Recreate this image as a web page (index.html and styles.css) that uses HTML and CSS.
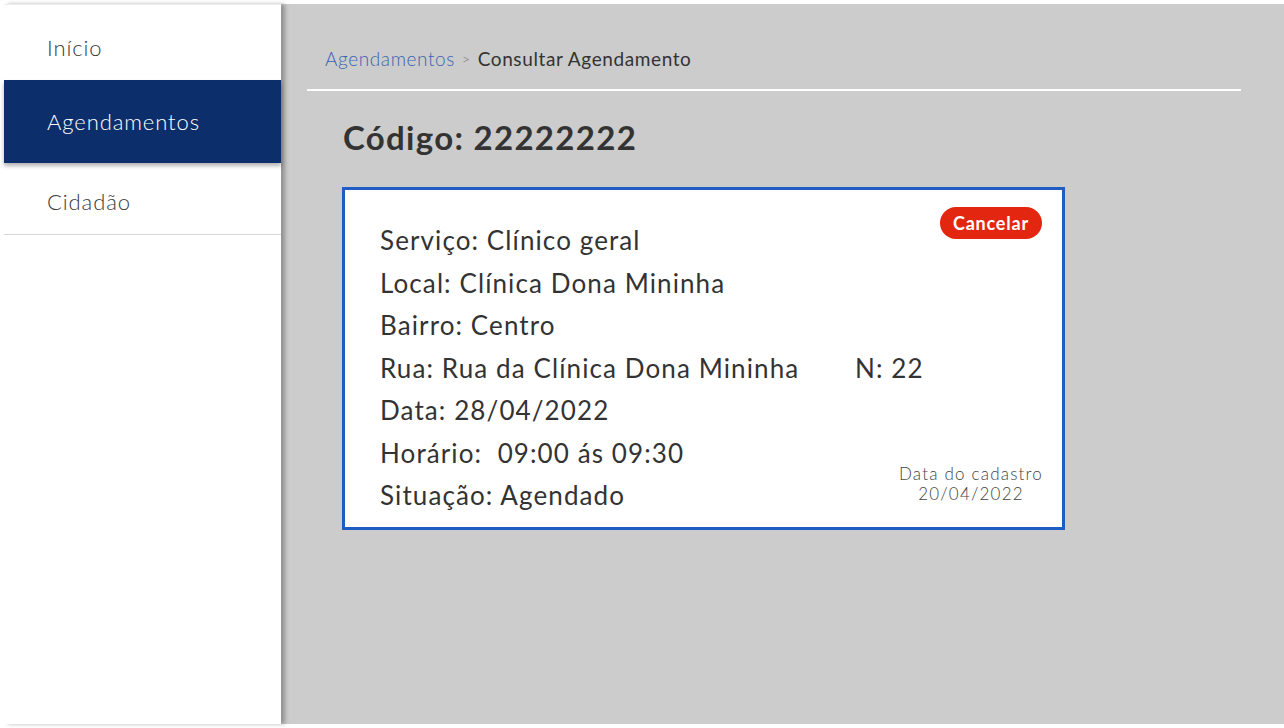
FILE: index.html
```html
<!DOCTYPE html>
<html lang="pt-BR">
<head>
<meta charset="utf-8">
<title>Consultar Agendamento</title>
<link rel="stylesheet" href="styles.css">
</head>
<body>
<div class="app">
  <nav class="sidebar">
    <a class="nav-item nav-first">Início</a>
    <a class="nav-item active">Agendamentos</a>
    <a class="nav-item nav-last">Cidadão</a>
  </nav>
  <main class="main">
    <div class="breadcrumb">
      <span class="crumb-link">Agendamentos</span>
      <span class="crumb-sep">&gt;</span>
      <span class="crumb-current">Consultar Agendamento</span>
    </div>
    <div class="content">
      <h1 class="title">Código: 22222222</h1>
      <section class="card">
        <button class="btn-cancel">Cancelar</button>
        <div class="line">Serviço: Clínico geral</div>
        <div class="line">Local: Clínica Dona Mininha</div>
        <div class="line">Bairro: Centro</div>
        <div class="line row"><span class="rua">Rua: Rua da Clínica Dona Mininha</span><span>N: 22</span></div>
        <div class="line">Data: 28/04/2022</div>
        <div class="line">Horário:&nbsp; 09:00 ás 09:30</div>
        <div class="line">Situação: Agendado</div>
        <div class="created">Data do cadastro<br>20/04/2022</div>
      </section>
    </div>
  </main>
</div>
</body>
</html>
```
FILE: styles.css
```css
* { box-sizing: border-box; }
html, body { margin: 0; padding: 0; background: #ffffff; }
body {
  font-family: Lato, "Noto Sans", sans-serif;
  color: #333333;
}
.app {
  display: flex;
  height: 720px;
  margin: 4px 0 4px 4px;
}
.sidebar {
  width: 277px;
  flex: none;
  background: #ffffff;
  border-top: 1px solid #ececec;
  display: flex;
  flex-direction: column;
  position: relative;
  z-index: 2;
  box-shadow: 4px 0 4px rgba(0,0,0,0.28);
}
.nav-item {
  display: flex;
  align-items: center;
  padding: 0 43px;
  font-size: 22px;
  font-weight: 300;
  color: #3a3a3a;
  height: 75px;
  letter-spacing: 0.9px;
}
.nav-first {
  padding-top: 10px;
}
.nav-item.active {
  height: 83px;
  background: #0c2f6c;
  color: #ffffff;
  box-shadow: 0 3px 4px rgba(0,0,0,0.3);
  position: relative;
}
.nav-last {
  height: 72px;
  border-bottom: 1px solid #d6d6d6;
  padding-top: 6px;
}
.main {
  flex: 1;
  background: #cccccc;
  display: flex;
  flex-direction: column;
}
.breadcrumb {
  margin: 0 43px 0 26px;
  padding: 43px 0 18px 18px;
  border-bottom: 2px solid #ffffff;
  font-size: 19px;
  line-height: 24px;
  display: flex;
  gap: 7px;
  align-items: center;
  letter-spacing: 0.6px;
}
.crumb-link { color: #3b63b3; font-weight: 300; }
.crumb-sep { color: #9a9a9a; font-size: 14px; }
.crumb-current { color: #333333; font-weight: 400; }
.content {
  padding: 0 0 0 61px;
}
.title {
  margin: 24px 0 28px 1px;
  font-size: 33px;
  line-height: 44px;
  font-weight: 700;
  color: #333333;
  letter-spacing: 1.3px;
}
.card {
  position: relative;
  width: 723px;
  background: #ffffff;
  border: 3px solid #1f5cc4;
  padding: 29px 20px 10px 35px;
}
.line {
  font-size: 26px;
  line-height: 42.5px;
  font-weight: 400;
  color: #333333;
  letter-spacing: 1.1px;
}
.row { display: flex; }
.rua { width: 475px; flex: none; }
.btn-cancel {
  position: absolute;
  top: 17px;
  right: 20px;
  height: 32px;
  padding: 0 13px;
  border: none;
  border-radius: 16px;
  background: #e3260f;
  color: #ffffff;
  font-family: Lato, "Noto Sans", sans-serif;
  font-size: 18px;
  font-weight: 700;
  letter-spacing: 0.8px;
}
.created {
  position: absolute;
  right: 19px;
  bottom: 23px;
  text-align: center;
  font-size: 17px;
  line-height: 20px;
  font-weight: 300;
  color: #444444;
  letter-spacing: 1.2px;
}
```
